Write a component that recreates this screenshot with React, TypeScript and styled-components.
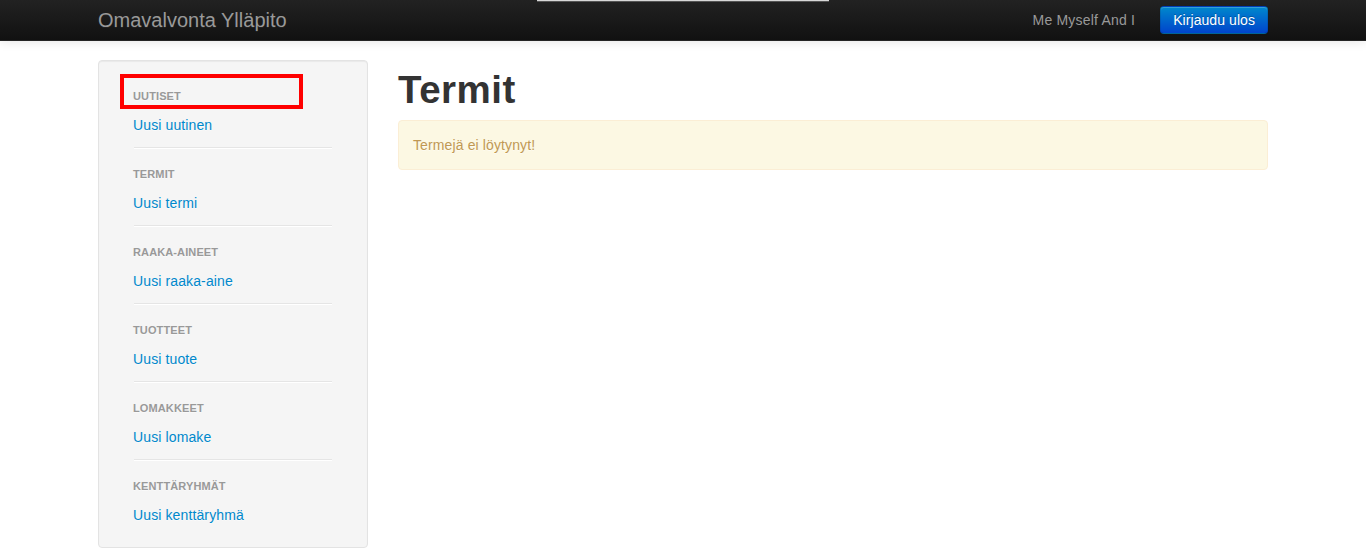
import React from "react";
import styled, { createGlobalStyle } from "styled-components";

const GlobalStyle = createGlobalStyle`
  html, body {
    margin: 0;
    padding: 0;
    background: #fff;
  }
  body {
    font-family: "Liberation Sans", Arial, Helvetica, sans-serif;
    font-size: 14px;
    line-height: 20px;
    color: #333;
    letter-spacing: 0.12px;
  }
`;

const sections = [
  { title: "Uutiset", link: "Uusi uutinen" },
  { title: "Termit", link: "Uusi termi" },
  { title: "Raaka-aineet", link: "Uusi raaka-aine" },
  { title: "Tuotteet", link: "Uusi tuote" },
  { title: "Lomakkeet", link: "Uusi lomake" },
  { title: "Kenttäryhmät", link: "Uusi kenttäryhmä" },
];

export default () => {
  return (
    <>
      <GlobalStyle />
      <Navbar>
        <TopStrip />
        <Container>
          <Brand href="#">Omavalvonta Ylläpito</Brand>
          <NavRight>
            <NavText>Me Myself And I</NavText>
            <PrimaryButton>Kirjaudu ulos</PrimaryButton>
          </NavRight>
        </Container>
      </Navbar>
      <Page>
        <Sidebar>
          <Marker />
          <NavList>
            {sections.map((s, i) => (
              <React.Fragment key={s.title}>
                {i > 0 && <Divider />}
                <NavHeader>{s.title}</NavHeader>
                <NavLink href="#">{s.link}</NavLink>
              </React.Fragment>
            ))}
          </NavList>
        </Sidebar>
        <Content>
          <Title>Termit</Title>
          <Alert>Termejä ei löytynyt!</Alert>
        </Content>
      </Page>
    </>
  );
};

const Navbar = styled.div`
  position: relative;
  height: 40px;
  background: linear-gradient(to bottom, #222 0%, #111 100%);
  border-bottom: 1px solid #252525;
  box-shadow: 0 1px 10px rgba(0, 0, 0, 0.1);
`;

const TopStrip = styled.div`
  position: absolute;
  top: 0;
  left: 50%;
  width: 292px;
  margin-left: -146px;
  height: 2px;
  background: #d8d8d8;
  border-bottom: 1px solid #555;
  box-sizing: border-box;
`;

const Container = styled.div`
  width: 1170px;
  margin: 0 auto;
  height: 40px;
  display: flex;
  align-items: center;
  justify-content: space-between;
`;

const Brand = styled.a`
  font-size: 20px;
  line-height: 20px;
  letter-spacing: 0;
  color: #999;
  text-decoration: none;
  text-shadow: 0 1px 0 #222;
`;

const NavRight = styled.div`
  display: flex;
  align-items: center;
  gap: 25px;
`;

const NavText = styled.span`
  color: #999;
  font-size: 14px;
  letter-spacing: 0.2px;
`;

const PrimaryButton = styled.button`
  font-family: inherit;
  font-size: 14px;
  line-height: 20px;
  letter-spacing: 0.07px;
  padding: 3px 12px;
  color: #fff;
  text-shadow: 0 -1px 0 rgba(0, 0, 0, 0.25);
  background: linear-gradient(to bottom, #0088cc, #0044cc);
  border: 1px solid #0044cc;
  border-color: rgba(0, 0, 0, 0.1) rgba(0, 0, 0, 0.1) rgba(0, 0, 0, 0.25);
  border-radius: 4px;
  box-shadow: inset 0 1px 0 rgba(255, 255, 255, 0.2), 0 1px 2px rgba(0, 0, 0, 0.05);
  cursor: pointer;
`;

const Page = styled.div`
  width: 1170px;
  margin: 19px auto 0;
  display: grid;
  grid-template-columns: 270px 870px;
  column-gap: 30px;
  align-items: start;
`;

const Sidebar = styled.div`
  position: relative;
  background: #f5f5f5;
  border: 1px solid #e3e3e3;
  border-radius: 4px;
  box-shadow: inset 0 1px 1px rgba(0, 0, 0, 0.05);
  padding: 22px 34px 19px;
`;

const Marker = styled.div`
  position: absolute;
  left: 21px;
  top: 13px;
  width: 183px;
  height: 35px;
  border: 4px solid #ff0000;
  box-sizing: border-box;
`;

const NavList = styled.div`
  display: flex;
  flex-direction: column;
`;

const NavHeader = styled.div`
  padding: 3px 0;
  font-size: 11px;
  line-height: 20px;
  font-weight: bold;
  text-transform: uppercase;
  color: #999;
  text-shadow: 0 1px 0 rgba(255, 255, 255, 0.5);
`;

const NavLink = styled.a`
  display: block;
  margin-top: 3px;
  padding: 3px 0;
  line-height: 20px;
  color: #0088cc;
  text-decoration: none;
  text-shadow: 0 1px 0 rgba(255, 255, 255, 0.5);
`;

const Divider = styled.div`
  height: 1px;
  margin: 9px 1px 12px;
  background: #e5e5e5;
  border-bottom: 1px solid #fff;
`;

const Content = styled.div``;

const Title = styled.h1`
  margin: 10px 0;
  font-size: 38.5px;
  line-height: 40px;
  font-weight: bold;
  letter-spacing: 0.5px;
  color: #333;
`;

const Alert = styled.div`
  padding: 14px 35px 14px 14px;
  background: #fcf8e3;
  border: 1px solid #fbeed5;
  border-radius: 4px;
  color: #c09853;
  text-shadow: 0 1px 0 rgba(255, 255, 255, 0.5);
  line-height: 20px;
`;
